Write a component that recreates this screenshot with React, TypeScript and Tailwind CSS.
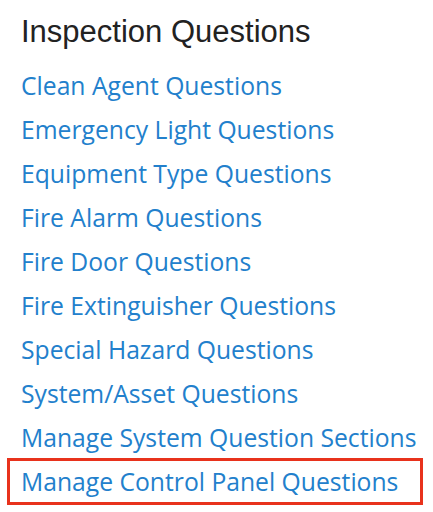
import React from "react";

const links = [
  "Clean Agent Questions",
  "Emergency Light Questions",
  "Equipment Type Questions",
  "Fire Alarm Questions",
  "Fire Door Questions",
  "Fire Extinguisher Questions",
  "Special Hazard Questions",
  "System/Asset Questions",
  "Manage System Question Sections",
];

export default function App() {
  return (
    <div className="w-[433px] h-[512px] bg-white overflow-hidden">
      <h1 className="pl-[21px] pt-[14px] text-[31px] leading-[36px] text-[#222222] font-['Liberation_Sans',Arial,sans-serif] font-normal">
        Inspection Questions
      </h1>
      <ul className="mt-[14px] flex flex-col font-['Open_Sans',sans-serif] text-[24.7px] leading-[44px] text-[#2280cc]">
        {links.map((l) => (
          <li key={l} className="pl-[21px]">
            <a href="#">{l}</a>
          </li>
        ))}
        <li className="-mt-[2px] ml-[7px] mr-[10px] pl-[11px] border-[3px] border-[#e8321c] leading-[41px]">
          <a href="#">Manage Control Panel Questions</a>
        </li>
      </ul>
    </div>
  );
}
